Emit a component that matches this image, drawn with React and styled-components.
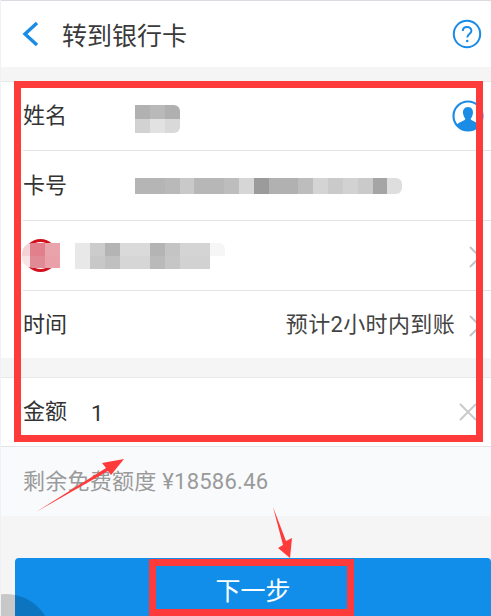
import styled, { createGlobalStyle } from "styled-components";

const NAME_CELLS = ["#b1b1b1", "#b9b9b9", "#b0b0b0", "#d2d2d2", "#e2e2e2", "#d9d9d9"];
const CARD_CELLS = [
  "#b5b5b5", "#b5b5b5", "#b9b9b9", "#c9c9c9", "#b7b7b7", "#b7b7b7", "#bdbdbd", "#d6d6d6", "#9b9b9b",
  "#b1b1b1", "#b1b1b1", "#bdbdbd", "#d4d4d4", "#cacaca", "#d2d2d2", "#cacaca", "#a5a5a5", "#dedede",
];
const BANK_CELLS = [
  "#e8e8e8", "#cccccc", "#b4b4b4", "#dadada", "#dadada", "#b4b4b4", "#c4c4c4", "#d4d4d4", "#d4d4d4", "#f6f6f6",
  "#e8e8e8", "#c8c8c8", "#c0c0c0", "#d6d6d6", "#d6d6d6", "#bababa", "#c6c6c6", "#d2d2d2", "#d2d2d2", "#ffffff",
];
const LOGO_CELLS = ["#f3d3d6", "#e27f8c", "#e9a3aa", "#f8e4e6", "#e08a95", "#e9a0a8"];

export default function App() {
  return (
    <Page>
      <GlobalStyle />
      <Header>
        <BackIcon viewBox="0 0 18 26">
          <path d="M15 2 L3 13 L15 24" />
        </BackIcon>
        <Title>转到银行卡</Title>
        <HelpIcon viewBox="0 0 30 30">
          <circle cx="15" cy="15" r="13.2" />
          <path d="M10.8 12 C10.8 6.8 19.4 6.8 19.4 11.8 C19.4 15 15.2 15 15.2 18.6" />
          <circle className="dot" cx="15.2" cy="22" r="1.3" />
        </HelpIcon>
      </Header>
      <Band />
      <Group>
        <Row $height={69}>
          <Label>姓名</Label>
          <Mosaic $cols={3} $w={15} $h={14} $left={68} $top={6}>
            {NAME_CELLS.map((c, i) => <Cell key={i} $color={c} />)}
          </Mosaic>
          <ContactIcon viewBox="0 0 30 30">
            <circle cx="15" cy="15" r="13.6" />
            <path
              className="body"
              d="M15 6.5 C18.6 6.5 20 9.4 19.6 12.6 C19.3 15 18.2 16.6 17.5 17.6 C17.5 19.6 23.6 20.4 26 23.6 C23.4 26.6 19.4 28.4 15 28.4 C10.6 28.4 6.6 26.6 4 23.6 C6.4 20.4 12.5 19.6 12.5 17.6 C11.8 16.6 10.7 15 10.4 12.6 C10 9.4 11.4 6.5 15 6.5 Z"
            />
          </ContactIcon>
        </Row>
        <Row $height={70}>
          <Label>卡号</Label>
          <Mosaic $cols={18} $w={14.85} $h={16} $left={68}>
            {CARD_CELLS.map((c, i) => <Cell key={i} $color={c} />)}
          </Mosaic>
        </Row>
        <Row $height={70}>
          <BankLogo>
            <LogoMosaic>
              {LOGO_CELLS.map((c, i) => <Cell key={i} $color={c} />)}
            </LogoMosaic>
          </BankLogo>
          <Mosaic $cols={10} $w={15} $h={13} $left={18}>
            {BANK_CELLS.map((c, i) => <Cell key={i} $color={c} />)}
          </Mosaic>
          <Chevron viewBox="0 0 14 24">
            <path d="M2 2 L12 12 L2 22" />
          </Chevron>
        </Row>
        <Row $height={67} $last>
          <Label>时间</Label>
          <Value>预计2小时内到账</Value>
          <Chevron viewBox="0 0 14 24">
            <path d="M2 2 L12 12 L2 22" />
          </Chevron>
        </Row>
      </Group>
      <Band $tall />
      <AmountRow>
        <Label>金额</Label>
        <Amount>1</Amount>
        <ClearIcon viewBox="0 0 18 18">
          <path d="M1 1 L17 17 M17 1 L1 17" />
        </ClearIcon>
      </AmountRow>
      <Hint>剩余免费额度 ¥18586.46</Hint>
      <Footer>
        <NextButton>下一步</NextButton>
      </Footer>

      <FloatBall />
      <FormMark />
      <ButtonMark />
      <Arrows viewBox="0 0 491 616">
        <path d="M36 512 L106 468 L102 463 L124 459 L111 475 L108 471 Z" />
        <path d="M273 507 L286 541 L292 538 L290 558 L278 548 L283 545 Z" />
      </Arrows>
    </Page>
  );
}

const GlobalStyle = createGlobalStyle`
  html, body {
    margin: 0;
    background: #f5f5f5;
  }
  * {
    box-sizing: border-box;
  }
`;

const Page = styled.div`
  position: relative;
  width: 491px;
  height: 616px;
  overflow: hidden;
  background: #f5f5f5;
  border-left: 1px solid #eef1f6;
  font-family: Roboto, "Noto Sans CJK SC", sans-serif;
  color: #333;
`;

const Header = styled.header`
  height: 67px;
  display: flex;
  align-items: center;
  padding: 0 9px 0 21px;
  background: #fff;
  border-top: 1px solid #d8dce0;
`;

const BackIcon = styled.svg`
  width: 18px;
  height: 26px;
  fill: none;
  stroke: #1a8ce6;
  stroke-width: 3.4;
`;

const Title = styled.h1`
  flex: 1;
  margin: 0 0 0 22px;
  font-size: 25px;
  font-weight: 400;
  color: #3a3a3a;
`;

const HelpIcon = styled.svg`
  width: 30px;
  height: 30px;
  margin-top: -1px;
  fill: none;
  stroke: #1a8ce6;
  stroke-width: 2;

  .dot {
    fill: #1a8ce6;
    stroke: none;
  }
`;

const Band = styled.div`
  height: ${(p) => (p.$tall ? "20px" : "15px")};
  background: #f5f5f5;
  border-bottom: 1px solid #e6e8ea;
`;

const Group = styled.section`
  background: #fff;
  padding-left: 22px;
`;

const Row = styled.div`
  height: ${(p) => p.$height}px;
  display: flex;
  align-items: center;
  padding-right: 2px;
  border-bottom: ${(p) => (p.$last ? "none" : "1px solid #e2e4e6")};
`;

const Label = styled.span`
  width: 44px;
  flex: none;
  margin-bottom: 6px;
  font-size: 22px;
  color: #333;
`;

const Mosaic = styled.div`
  display: grid;
  grid-template-columns: repeat(${(p) => p.$cols}, ${(p) => p.$w}px);
  grid-auto-rows: ${(p) => p.$h}px;
  flex: none;
  margin-left: ${(p) => p.$left}px;
  margin-top: ${(p) => p.$top || 0}px;
  border-radius: 0 6px 6px 0;
  overflow: hidden;
`;

const LogoMosaic = styled.div`
  display: grid;
  grid-template-columns: 8px 15px 15px;
  grid-auto-rows: 12.5px;
  flex: none;
  margin-left: -2px;
  border-radius: 10px 0 0 10px;
  overflow: hidden;
`;

const Cell = styled.i`
  display: block;
  background: ${(p) => p.$color};
`;

const ContactIcon = styled.svg`
  width: 32px;
  height: 32px;
  margin-left: auto;
  margin-right: 5px;
  fill: #fff;
  stroke: #1a8ce6;
  stroke-width: 2;

  .body {
    fill: #1a8ce6;
    stroke: none;
  }
`;

const BankLogo = styled.div`
  width: 33px;
  height: 33px;
  flex: none;
  margin-left: 1px;
  display: flex;
  align-items: center;
  border-radius: 50%;
  box-shadow: inset 0 0 0 3px #d3111e;
`;

const Chevron = styled.svg`
  width: 14px;
  height: 24px;
  margin-left: auto;
  margin-top: 2px;
  margin-right: 7px;
  fill: none;
  stroke: #c4c4c4;
  stroke-width: 2;
`;

const Value = styled.span`
  margin-left: auto;
  margin-bottom: 6px;
  font-size: 22px;
  letter-spacing: 0.35px;
  color: #444;

  & + ${Chevron} {
    margin-left: 13px;
  }
`;

const AmountRow = styled.div`
  height: 69px;
  display: flex;
  align-items: center;
  padding: 0 14px 0 22px;
  background: #fff;
  border-bottom: 1px solid #e2e4e8;
`;

const Amount = styled.span`
  flex: 1;
  margin: 2px 0 0 24px;
  font-size: 22px;
  color: #333;
`;

const ClearIcon = styled.svg`
  width: 18px;
  height: 18px;
  fill: none;
  stroke: #c9c9c9;
  stroke-width: 1.8;
`;

const Hint = styled.p`
  height: 69px;
  margin: 0;
  padding: 0 0 5px 22px;
  display: flex;
  align-items: center;
  background: #f9fafc;
  font-size: 22px;
  letter-spacing: 0.25px;
  color: #9a9a9a;
`;

const Footer = styled.div`
  padding: 42px 0 0 14px;
`;

const NextButton = styled.button`
  display: block;
  width: 100%;
  height: 70px;
  padding: 0 0 8px;
  border: none;
  border-radius: 4px 4px 0 0;
  background: #118eea;
  color: #fff;
  font-family: inherit;
  font-size: 25px;
`;

const FloatBall = styled.div`
  position: absolute;
  left: -41px;
  top: 594px;
  width: 92px;
  height: 92px;
  border-radius: 50%;
  background: rgba(0, 0, 0, 0.18);
`;

const FormMark = styled.div`
  position: absolute;
  left: 13px;
  top: 81px;
  width: 469px;
  height: 361px;
  border: 7px solid #ff3a3a;
`;

const ButtonMark = styled.div`
  position: absolute;
  left: 148px;
  top: 559px;
  width: 205px;
  height: 57px;
  border: 7px solid #ff3a3a;
`;

const Arrows = styled.svg`
  position: absolute;
  left: -1px;
  top: 0;
  width: 491px;
  height: 616px;
  fill: #ff3a3a;
`;
